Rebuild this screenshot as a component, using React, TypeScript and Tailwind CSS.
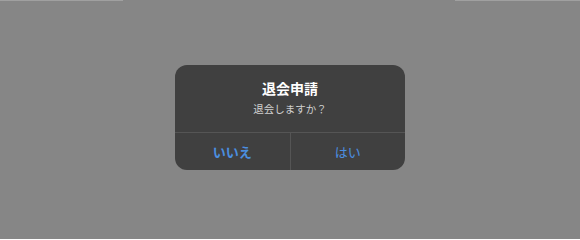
export default function App() {
  return (
    <div
      className="relative h-[239px] w-full bg-[#868686] flex items-start justify-center"
      style={{ fontFamily: '"Noto Sans CJK JP", "Noto Sans", sans-serif' }}
    >
      <div className="absolute top-0 left-0 h-px w-[123px] bg-[#a0a0a0]" />
      <div className="absolute top-0 right-0 h-px w-[125px] bg-[#a0a0a0]" />
      <div className="mt-[65px] w-[230px] rounded-[12px] bg-[#404040] overflow-hidden">
        <div className="h-[67px] flex flex-col items-center pt-[13px]">
          <div className="text-[14px] leading-[20px] font-bold text-white">退会申請</div>
          <div className="mt-[3px] text-[10.5px] leading-[15px] text-[#d0d0d0]">退会しますか？</div>
        </div>
        <div className="h-[38px] flex border-t border-[#555555]">
          <button className="flex-1 flex items-center justify-center text-[13px] font-bold text-[#4b8fe0]">
            いいえ
          </button>
          <div className="w-px bg-[#555555]" />
          <button className="flex-1 flex items-center justify-center text-[13px] text-[#4b8fe0]">
            はい
          </button>
        </div>
      </div>
    </div>
  );
}
